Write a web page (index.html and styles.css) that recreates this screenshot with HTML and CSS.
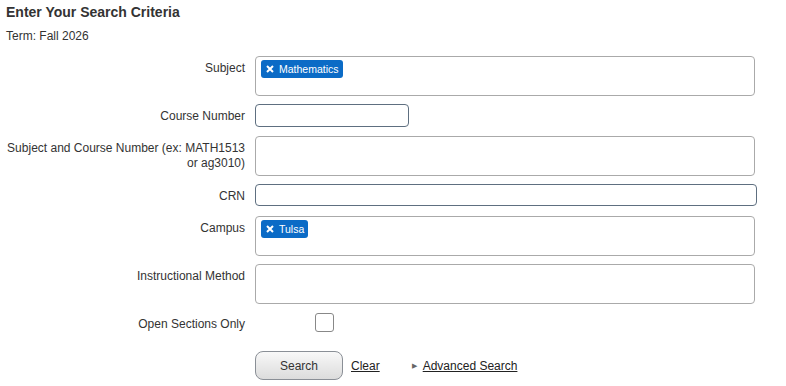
FILE: index.html
```html
<!DOCTYPE html>
<html>
  <head>
    <title>Class Search</title>
    <link rel="stylesheet" href="styles.css">
  </head>

  <body>
    <h1>Enter Your Search Criteria</h1>
    <div class="term">Term: Fall 2026</div>

    <div class="form-row">
      <label>Subject</label>
      <div class="multi-select">
        <span class="chip"><svg class="chip-x" width="8" height="8" viewBox="0 0 8 8"><path d="M1 1L7 7M7 1L1 7" stroke="white" stroke-width="2"/></svg>Mathematics</span>
      </div>
    </div>

    <div class="form-row">
      <label for="course-number">Course Number</label>
      <input type="text" id="course-number" class="short-input" />
    </div>

    <div class="form-row">
      <label>Subject and Course Number (ex: MATH1513<br />or ag3010)</label>
      <div class="multi-select"></div>
    </div>

    <div class="form-row">
      <label for="crn">CRN</label>
      <input type="text" id="crn" class="wide-input" />
    </div>

    <div class="form-row">
      <label>Campus</label>
      <div class="multi-select">
        <span class="chip"><svg class="chip-x" width="8" height="8" viewBox="0 0 8 8"><path d="M1 1L7 7M7 1L1 7" stroke="white" stroke-width="2"/></svg>Tulsa</span>
      </div>
    </div>

    <div class="form-row method-row">
      <label>Instructional Method</label>
      <div class="multi-select"></div>
    </div>

    <div class="form-row check-row">
      <label for="open-only">Open Sections Only</label>
      <div><input type="checkbox" id="open-only" class="check" /></div>
    </div>

    <div class="actions">
      <button id="search-button">Search</button>
      <a href="#" class="link">Clear</a>
      <span class="advanced"><span class="arrow">&#9654;</span><a href="#" class="link">Advanced Search</a></span>
    </div>
  </body>
</html>
```

FILE: styles.css
```css
body {
  font-family: "Liberation Sans", Arial, sans-serif;
  font-size: 12px;
  color: #333;
  margin: 0;
  padding: 4px 6px;
}

h1 {
  font-size: 14px;
  line-height: 17px;
  margin: 0 0 8px 0;
  color: #333;
}

.term {
  line-height: 15px;
  margin-bottom: 12px;
}

.form-row {
  display: grid;
  grid-template-columns: 239px auto;
  column-gap: 10px;
  margin-bottom: 8px;
}

.form-row label {
  text-align: right;
  line-height: 15px;
  padding-top: 5px;
}

.multi-select {
  box-sizing: border-box;
  width: 500px;
  height: 40px;
  border: 1px solid #aaa;
  border-radius: 4px;
  padding: 3px 5px;
}

.chip {
  display: inline-flex;
  align-items: center;
  height: 18px;
  padding: 0 4px 0 5px;
  background-color: #0b6bc6;
  color: white;
  border-radius: 3px;
  font-size: 10.5px;
}

.chip-x {
  margin-right: 5px;
}

input[type="text"] {
  box-sizing: border-box;
  height: 23px;
  border: 1px solid #5e6f80;
  border-radius: 4px;
  padding: 2px 4px;
  font-family: inherit;
}

.short-input {
  width: 154px;
  margin-bottom: 1px;
}

.wide-input {
  width: 502px;
  height: 22px !important;
  margin-bottom: 2px;
}

.method-row {
  margin-bottom: 9px;
}

.check-row {
  margin-bottom: 19px;
}

.check-row label {
  padding-top: 4px;
}

.check {
  appearance: none;
  box-sizing: border-box;
  width: 19px;
  height: 19px;
  margin: 0 0 0 60px;
  border: 1px solid #888;
  border-radius: 3px;
  background: white;
  display: block;
}

.actions {
  display: flex;
  align-items: center;
  margin-left: 249px;
}

button {
  box-sizing: border-box;
  width: 88px;
  height: 29px;
  font-family: inherit;
  font-size: 12px;
  color: #333;
  border: 1px solid #8a8f96;
  border-radius: 8px;
  background: linear-gradient(#f8f8f8, #dcdcdc);
  margin-right: 8px;
  cursor: pointer;
}

.link {
  color: #222;
  text-decoration: underline;
}

.advanced {
  margin-left: 32px;
  display: flex;
  align-items: center;
}

.arrow {
  font-size: 7px;
  color: #666;
  margin-right: 6px;
}
```
